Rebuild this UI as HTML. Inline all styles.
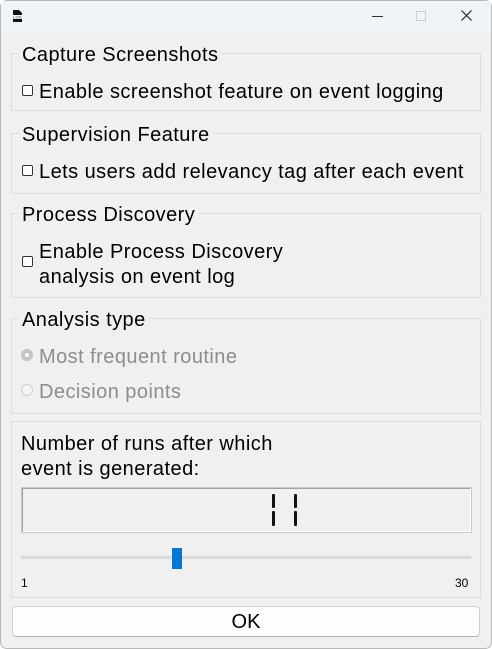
<!DOCTYPE html>
<html><head><style>
*{margin:0;padding:0;box-sizing:border-box}
body{width:492px;height:649px;background:#fff;font-family:"Liberation Sans",sans-serif;position:relative;overflow:hidden}
.win{position:absolute;left:0;top:0;width:492px;height:649px;background:#f0f0f0;box-shadow:inset 0 0 0 1px #b8b8b8;border-radius:7px;overflow:hidden}
.tb{position:absolute;left:1px;top:1px;width:490px;height:31px;background:#eff4f9}
.a{position:absolute;white-space:nowrap;font-size:20px;letter-spacing:0.45px;color:#000;line-height:22px}
.g{position:absolute;border:1px solid #dcdcdc;}
.t{background:#f0f0f0;padding:0 3px}
.cb{position:absolute;width:11px;height:11px;border:1px solid #333;border-radius:2px;background:#fff}
.rd{position:absolute;width:12px;height:12px;border-radius:50%;border:1px solid #ccc;background:#f4f4f4}
.gr{color:#8d8d8d}
.seg{position:absolute;width:3px;background:#111;border-radius:1px}
</style></head><body><div class="win">
<div class="tb">
<svg style="position:absolute;left:10px;top:8px" width="13" height="14" viewBox="0 0 13 14"><path d="M2 1h6l3 3v9H2z" fill="#111"/><rect x="1" y="6" width="11" height="4" fill="#fff"/><text x="6.5" y="9.3" font-size="4" text-anchor="middle" font-family="Liberation Sans">LOG</text></svg>
<div style="position:absolute;left:371px;top:15px;width:11px;height:1px;background:#333"></div>
<div style="position:absolute;left:415px;top:10px;width:10px;height:10px;border:1px solid #ccc"></div>
<svg style="position:absolute;left:460px;top:9px" width="11" height="11"><path d="M0.5 0.5L10.5 10.5M10.5 0.5L0.5 10.5" stroke="#222" stroke-width="1.2"/></svg>
</div>

<div class="g" style="left:11px;top:53px;width:470px;height:58px"></div>
<div class="a t" style="left:19px;top:44px">Capture Screenshots</div>
<div class="cb" style="left:22px;top:85px"></div>
<div class="a" style="left:39px;top:81px">Enable screenshot feature on event logging</div>

<div class="g" style="left:11px;top:133px;width:470px;height:61px"></div>
<div class="a t" style="left:19px;top:124px">Supervision Feature</div>
<div class="cb" style="left:22px;top:165px"></div>
<div class="a" style="left:39px;top:161px">Lets users add relevancy tag after each event</div>

<div class="g" style="left:11px;top:213px;width:470px;height:85px"></div>
<div class="a t" style="left:19px;top:204px">Process Discovery</div>
<div class="cb" style="left:22px;top:256px"></div>
<div class="a" style="left:39px;top:241px">Enable Process Discovery</div>
<div class="a" style="left:39px;top:266px">analysis on event log</div>

<div class="g" style="left:11px;top:318px;width:470px;height:96px"></div>
<div class="a t" style="left:19px;top:309px">Analysis type</div>
<div class="rd" style="left:21px;top:349px;background:#fff;border:4px solid #c4c4c4"></div>
<div class="a gr" style="left:39px;top:346px">Most frequent routine</div>
<div class="rd" style="left:21px;top:384px"></div>
<div class="a gr" style="left:39px;top:381px">Decision points</div>

<div class="g" style="left:11px;top:421px;width:470px;height:177px"></div>
<div class="a" style="left:21px;top:433px">Number of runs after which</div>
<div class="a" style="left:21px;top:458px">event is generated:</div>
<div style="position:absolute;left:22px;top:488px;width:449px;height:44px;border:1px solid #a0a0a0;border-right-color:#fff;border-bottom-color:#fff;outline:1px solid #c8c8c8"></div>
<div class="seg" style="left:272px;top:494px;height:14px"></div>
<div class="seg" style="left:272px;top:511px;height:15px"></div>
<div class="seg" style="left:294px;top:494px;height:14px"></div>
<div class="seg" style="left:294px;top:511px;height:15px"></div>
<div style="position:absolute;left:21px;top:556px;width:450px;height:3px;background:#e0e0e0;border:1px solid #d6d6d6"></div>
<div style="position:absolute;left:172px;top:548px;width:10px;height:21px;background:#0078d4"></div>
<div class="a" style="left:21px;top:572px;font-size:12px;letter-spacing:0">1</div>
<div class="a" style="left:455px;top:572px;font-size:12px;letter-spacing:0">30</div>

<div style="position:absolute;left:12px;top:606px;width:468px;height:31px;background:#fdfdfd;border:1px solid #d0d0d0;border-bottom-color:#b0b0b0;border-radius:4px;text-align:center;font-size:20px;line-height:30px">OK</div>
</div></body></html>
